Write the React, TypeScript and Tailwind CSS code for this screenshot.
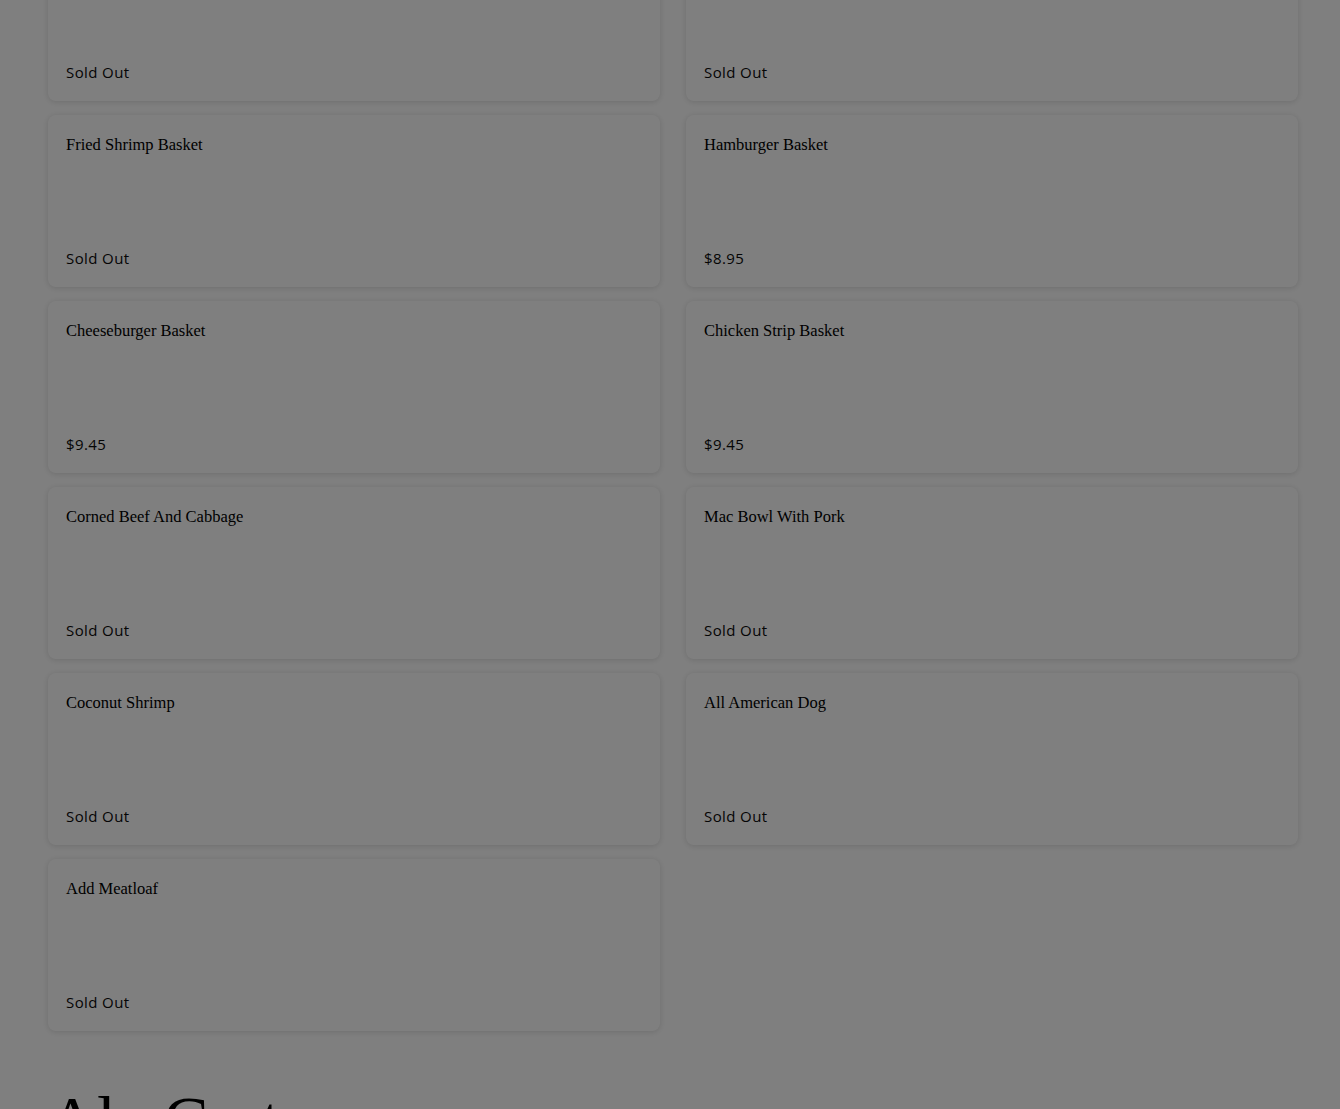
import React from "react";

type Item = { name: string; price: string };

const items: Item[] = [
  { name: "", price: "Sold Out" },
  { name: "", price: "Sold Out" },
  { name: "Fried Shrimp Basket", price: "Sold Out" },
  { name: "Hamburger Basket", price: "$8.95" },
  { name: "Cheeseburger Basket", price: "$9.45" },
  { name: "Chicken Strip Basket", price: "$9.45" },
  { name: "Corned Beef And Cabbage", price: "Sold Out" },
  { name: "Mac Bowl With Pork", price: "Sold Out" },
  { name: "Coconut Shrimp", price: "Sold Out" },
  { name: "All American Dog", price: "Sold Out" },
  { name: "Add Meatloaf", price: "Sold Out" },
];

function Card({ item }: { item: Item }) {
  return (
    <div className="h-[172px] rounded-lg bg-white shadow-[0_1px_6px_rgba(0,0,0,0.14)] flex flex-col justify-between pl-[18px] pr-[18px] pt-[19px] pb-[19px]">
      <div
        className="min-h-[22px] text-[16.5px] leading-[22px] text-black"
        style={{ fontFamily: '"Liberation Serif", "Times New Roman", serif' }}
      >
        {item.name}
      </div>
      <div
        className="text-[15px] leading-[20px] tracking-[0.4px] text-[#0a0a0a]"
        style={{ fontFamily: '"Open Sans", "Noto Sans", sans-serif' }}
      >
        {item.price}
      </div>
    </div>
  );
}

export default function App() {
  return (
    <div className="relative h-[1109px] overflow-hidden bg-white">
      <div className="-mt-[71px] pl-[48px] pr-[42px]">
        <div className="grid grid-cols-2 gap-x-[26px] gap-y-[14px]">
          {items.map((it, i) => (
            <Card key={i} item={it} />
          ))}
        </div>
        <h2
          className="mt-[50px] text-[68px] leading-[78px] text-black"
          style={{ fontFamily: '"Liberation Serif", "Times New Roman", serif' }}
        >
          Ala Carte
        </h2>
      </div>
      <div className="fixed inset-0 bg-black/50" />
    </div>
  );
}
